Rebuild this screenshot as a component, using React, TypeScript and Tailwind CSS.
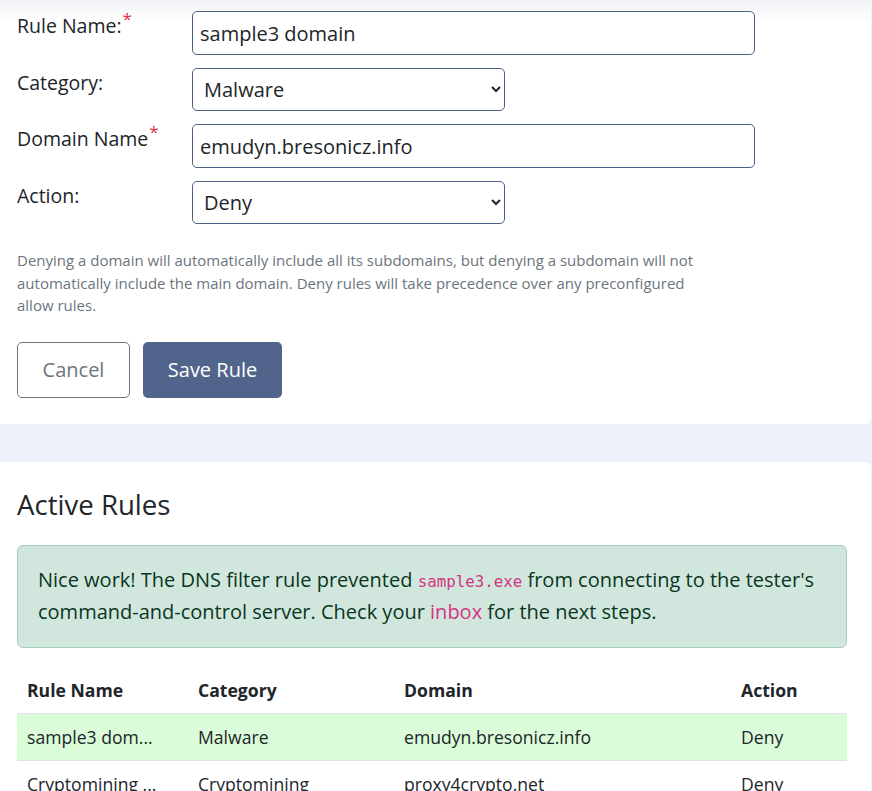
import React from "react";

const rules = [
  { name: "sample3 dom...", category: "Malware", domain: "emudyn.bresonicz.info", action: "Deny", highlight: true },
  { name: "Cryptomining ...", category: "Cryptomining", domain: "proxy4crypto.net", action: "Deny", highlight: false },
];

function Label({ text, required }: { text: string; required?: boolean }) {
  return (
    <label className="w-[175px] shrink-0 text-[19.5px] leading-[30px] text-[#212529]">
      {text}
      {required && <sup className="text-[#dc3545] text-[17px] ml-[1px] top-[-0.45em]">*</sup>}
    </label>
  );
}

export default function App() {
  return (
    <div className="min-h-screen bg-[#edf1f9] font-['Open_Sans',sans-serif] text-[#212529]">
      {/* rule form */}
      <div className="w-[871px] bg-[linear-gradient(to_bottom,#f1f2f5_0px,#ffffff_22px)] rounded-br-md pl-[17px] pt-[11px] pb-[26px]">
        <div className="flex items-start mb-[13px]">
          <Label text="Rule Name:" required />
          <input
            defaultValue="sample3 domain"
            className="w-[563px] h-[44px] border border-[#4d5f86] rounded-[5px] px-[7px] text-[20px] text-[#212529] bg-white outline-none"
          />
        </div>
        <div className="flex items-start mb-[13px]">
          <Label text="Category:" />
          <select
            defaultValue="Malware"
            className="w-[313px] h-[43px] border border-[#4d5f86] rounded-[5px] px-[7px] text-[20px] text-[#212529] bg-white outline-none"
          >
            <option>Malware</option>
            <option>Cryptomining</option>
            <option>Phishing</option>
          </select>
        </div>
        <div className="flex items-start mb-[13px]">
          <Label text="Domain Name" required />
          <input
            defaultValue="emudyn.bresonicz.info"
            className="w-[563px] h-[44px] border border-[#4d5f86] rounded-[5px] px-[7px] text-[20px] text-[#212529] bg-white outline-none"
          />
        </div>
        <div className="flex items-start">
          <Label text="Action:" />
          <select
            defaultValue="Deny"
            className="w-[313px] h-[43px] border border-[#4d5f86] rounded-[5px] px-[7px] text-[20px] text-[#212529] bg-white outline-none"
          >
            <option>Deny</option>
            <option>Allow</option>
          </select>
        </div>

        <p className="mt-[25px] max-w-[700px] text-[15px] leading-[22.5px] text-[#6c757d]">
          Denying a domain will automatically include all its subdomains, but denying a subdomain will not
          automatically include the main domain. Deny rules will take precedence over any preconfigured
          allow rules.
        </p>

        <div className="flex gap-[13px] mt-[25px]">
          <button className="h-[56px] w-[113px] rounded-[5px] border border-[#6c757d] bg-white text-[20px] text-[#6c757d]">
            Cancel
          </button>
          <button className="h-[56px] w-[139px] rounded-[5px] bg-[#51658c] text-[20px] text-white">
            Save Rule
          </button>
        </div>
      </div>

      {/* active rules */}
      <div className="mt-[38px] w-[871px] bg-white rounded-tr-md pl-[17px] pr-[24px] pt-[25px] pb-10">
        <h2 className="text-[27.6px] leading-[34px] font-normal text-[#212529]">Active Rules</h2>

        <div className="mt-[24px] rounded-[6px] border border-[#a3cfbb] bg-[#d1e7dd] px-[20px] pt-[19px] pb-[20px] text-[20px] leading-[30px] text-[#0a3622]">
          Nice work! The DNS filter rule prevented{" "}
          <code className="font-['DejaVu_Sans_Mono',monospace] text-[15.8px] text-[#d63384]">sample3.exe</code> from
          connecting to the tester's command-and-control server. Check your{" "}
          <a className="text-[#d63384]">inbox</a> for the next steps.
        </div>

        <table className="mt-[20px] w-[830px] table-fixed border-collapse text-[17.6px]">
          <colgroup>
            <col className="w-[171px]" />
            <col className="w-[206px]" />
            <col className="w-[337px]" />
            <col className="w-[116px]" />
          </colgroup>
          <thead>
            <tr className="border-b border-[#dee2e6]">
              <th className="h-[46px] px-[10px] text-left font-bold">Rule Name</th>
              <th className="px-[10px] text-left font-bold">Category</th>
              <th className="px-[10px] text-left font-bold">Domain</th>
              <th className="px-[10px] text-left font-bold">Action</th>
            </tr>
          </thead>
          <tbody>
            {rules.map((r) => (
              <tr
                key={r.domain}
                className={r.highlight ? "border-b border-[#dee2e6] bg-[#dafcd8]" : "border-b border-[#dee2e6]"}
              >
                <td className="h-[47px] px-[10px] whitespace-nowrap">{r.name}</td>
                <td className="px-[10px]">{r.category}</td>
                <td className="px-[10px]">{r.domain}</td>
                <td className="px-[10px]">{r.action}</td>
              </tr>
            ))}
          </tbody>
        </table>
      </div>
    </div>
  );
}
